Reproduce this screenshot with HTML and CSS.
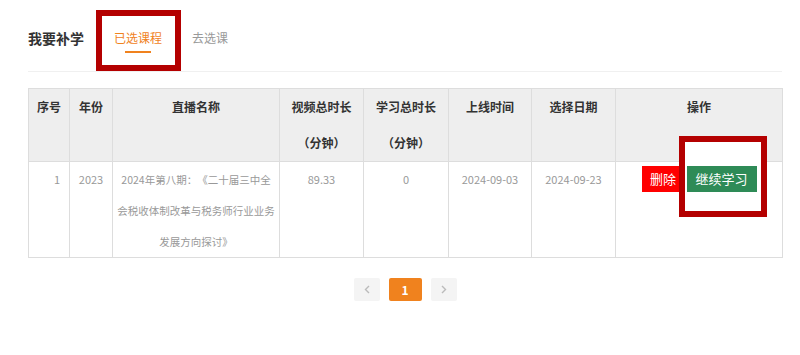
FILE: index.html
```html
<!DOCTYPE html>
<html lang="zh-CN">
<head>
  <meta charset="UTF-8">
  <title>我要补学</title>
  <link rel="stylesheet" href="styles.css">
</head>
<body>
  <div class="wrap">
    <div class="head">
      <h2 class="title">我要补学</h2>
      <a class="tab active">已选课程<span class="mark mark-tab"></span></a>
      <a class="tab">去选课</a>
    </div>

    <table class="list">
      <colgroup>
        <col style="width:41px"><col style="width:43px"><col style="width:167px"><col style="width:84px">
        <col style="width:85px"><col style="width:83px"><col style="width:84px"><col style="width:167px">
      </colgroup>
      <thead>
        <tr>
          <th>序号</th>
          <th>年份</th>
          <th>直播名称</th>
          <th>视频总时长<br>（分钟）</th>
          <th>学习总时长<br>（分钟）</th>
          <th>上线时间</th>
          <th>选择日期</th>
          <th>操作</th>
        </tr>
      </thead>
      <tbody>
        <tr>
          <td class="num">1</td>
          <td>2023</td>
          <td class="name">2024年第八期：《二十届三中全<br>会税收体制改革与税务师行业业务<br>发展方向探讨》</td>
          <td>89.33</td>
          <td>0</td>
          <td>2024-09-03</td>
          <td>2024-09-23</td>
          <td class="ops">
            <div class="btns">
              <a class="btn del">删除</a>
              <span class="go-wrap">
                <span class="mark mark-go"></span>
                <a class="btn go">继续学习</a>
              </span>
            </div>
          </td>
        </tr>
      </tbody>
    </table>

    <div class="pager">
      <a class="pg arrow">
        <svg width="6" height="9" viewBox="0 0 6 9"><path d="M5 1L1.5 4.5L5 8" fill="none" stroke="#bbb" stroke-width="1.4"/></svg>
      </a>
      <a class="pg current">1</a>
      <a class="pg arrow">
        <svg width="6" height="9" viewBox="0 0 6 9"><path d="M1 1L4.5 4.5L1 8" fill="none" stroke="#bbb" stroke-width="1.4"/></svg>
      </a>
    </div>
  </div>
</body>
</html>
```

FILE: styles.css
```css
body {
  margin: 0;
  background: #fff;
  font-family: "Noto Sans CJK SC", "Liberation Sans", sans-serif;
  color: #333;
  text-spacing-trim: space-all;
}
.wrap {
  margin-left: 28px;
  width: 754px;
}
.head {
  display: flex;
  align-items: flex-start;
  padding-top: 28px;
  height: 43px;
  border-bottom: 1px solid #f0f0f0;
}
.title {
  margin: 0;
  font-size: 14px;
  line-height: 20px;
  font-weight: bold;
  color: #333;
}
.tab {
  position: relative;
  margin-left: 30px;
  font-size: 12px;
  line-height: 20px;
  color: #999;
}
.tab.active {
  color: #f0821e;
}
.tab.active::after {
  content: "";
  position: absolute;
  left: 50%;
  top: 23px;
  width: 26px;
  height: 2px;
  margin-left: -13px;
  background: #f0821e;
}
.mark {
  position: absolute;
  box-sizing: border-box;
  border: 6px solid #b40000;
}
.mark-tab {
  left: -18px;
  top: -18px;
  width: 85px;
  height: 61px;
}
.list {
  margin-top: 16px;
  width: 754px;
  border-collapse: collapse;
  table-layout: fixed;
  border: 1px solid #ddd;
}
.list th,
.list td {
  border: 1px solid #ddd;
  text-align: center;
  vertical-align: top;
  padding: 0;
}
.list th {
  background: #eee;
  font-size: 12px;
  line-height: 36px;
  font-weight: bold;
  color: #333;
}
.list td {
  padding: 2px 3px 0;
  font-size: 11px;
  line-height: 31px;
  color: #999;
}
.list td.name {
  font-size: 10.5px;
  white-space: nowrap;
}
.list td.num {
  text-align: right;
  padding-right: 9px;
}
.list td.ops {
  padding-top: 4px;
}
.btns {
  display: flex;
  justify-content: center;
  gap: 2px;
}
.btn {
  display: block;
  height: 26px;
  line-height: 26px;
  font-size: 13px;
  color: #fff;
  text-align: center;
}
.del {
  width: 43px;
  background: #ff0000;
}
.go-wrap {
  position: relative;
}
.go {
  position: relative;
  z-index: 2;
  width: 70px;
  background: #2e8b57;
}
.mark-go {
  z-index: 1;
  left: -8px;
  top: -30px;
  width: 88px;
  height: 81px;
  background: #fff;
}
.pager {
  display: flex;
  justify-content: center;
  gap: 9px;
  margin-top: 20px;
}
.pg {
  display: flex;
  align-items: center;
  justify-content: center;
  height: 23px;
  border-radius: 2px;
  font-size: 12px;
}
.arrow {
  width: 26px;
  background: #f4f4f4;
}
.current {
  width: 33px;
  background: #f0821e;
  color: #fff;
  font-weight: bold;
}
```
